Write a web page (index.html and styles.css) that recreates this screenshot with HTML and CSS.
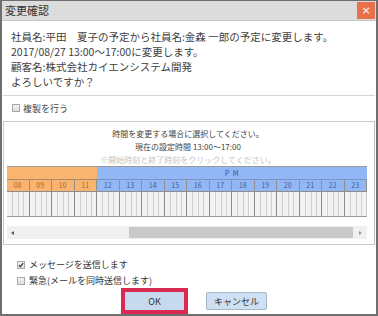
FILE: index.html
```html
<!DOCTYPE html>
<html lang="ja">
<head>
<meta charset="utf-8">
<link rel="stylesheet" href="styles.css">
</head>
<body>
<div class="dialog">
  <div class="titlebar">
    <span class="title">変更確認</span>
    <span class="close">×</span>
  </div>
  <div class="message">
    <p>社員名:平田　夏子の予定から社員名:金森 一郎の予定に変更します。</p>
    <p>2017/08/27 13:00〜17:00に変更します。</p>
    <p>顧客名:株式会社カイエンシステム開発</p>
    <p>よろしいですか？</p>
  </div>
  <label class="copy-row"><span class="cb"></span>複製を行う</label>
  <div class="panel">
    <div class="notes">
      <p>時間を変更する場合に選択してください。</p>
      <p>現在の設定時間 13:00〜17:00</p>
      <p class="hint">※開始時刻と終了時刻をクリックしてください。</p>
    </div>
    <div class="timeline">
      <div class="band am"></div>
      <div class="band pm">P M</div>
      <div class="hour am">08</div>
      <div class="hour am">09</div>
      <div class="hour am">10</div>
      <div class="hour am">11</div>
      <div class="hour pm">12</div>
      <div class="hour pm">13</div>
      <div class="hour pm">14</div>
      <div class="hour pm">15</div>
      <div class="hour pm">16</div>
      <div class="hour pm">17</div>
      <div class="hour pm">18</div>
      <div class="hour pm">19</div>
      <div class="hour pm">20</div>
      <div class="hour pm">21</div>
      <div class="hour pm">22</div>
      <div class="hour pm">23</div>
      <div class="slot"></div><div class="slot"></div><div class="slot"></div><div class="slot"></div>
      <div class="slot"></div><div class="slot"></div><div class="slot"></div><div class="slot"></div>
      <div class="slot"></div><div class="slot"></div><div class="slot"></div><div class="slot"></div>
      <div class="slot"></div><div class="slot"></div><div class="slot"></div><div class="slot"></div>
    </div>
    <div class="scrollbar">
      <span class="arrow left"></span>
      <span class="track"><span class="thumb"></span></span>
      <span class="arrow right"></span>
    </div>
  </div>
  <div class="options">
    <label class="opt"><span class="cb checked"><svg viewBox="0 0 8 8" width="8" height="8"><path d="M1.2 4.2 L3.2 6.2 L6.9 1.4" fill="none" stroke="#333" stroke-width="1.6"/></svg></span>メッセージを送信します</label>
    <label class="opt"><span class="cb"></span>緊急(メールを同時送信します)</label>
  </div>
  <div class="buttons">
    <button class="btn ok">OK</button>
    <button class="btn cancel">キャンセル</button>
  </div>
</div>
</body>
</html>
```
FILE: styles.css
```css
* { box-sizing: border-box; }
html, body { margin: 0; padding: 0; }
body {
  width: 378px;
  height: 316px;
  overflow: hidden;
  font-family: "Noto Sans CJK JP", "Noto Sans", sans-serif;
  color: #3a3a3a;
  background: #fff;
}
p { margin: 0; }

.dialog {
  width: 378px;
  height: 316px;
  border: 2px solid #6f6f6f;
  border-top-width: 1px;
  display: flex;
  flex-direction: column;
  background: #fff;
}

.titlebar {
  height: 20px;
  background: #dcdcdc;
  border-bottom: 1px solid #c6c6c6;
  display: flex;
  align-items: center;
  justify-content: space-between;
  padding: 0 1px 0 3px;
}
.title { font-size: 11px; color: #333; line-height: 1; }
.close {
  width: 18px;
  height: 17px;
  background: #e8704b;
  color: #fff;
  font-size: 11px;
  line-height: 17px;
  text-align: center;
  font-family: "DejaVu Sans", sans-serif;
}

.message {
  padding: 8px 0 6px 8px;
  font-size: 10.5px;
  line-height: 15px;
  color: #404040;
  border-bottom: 1px solid #d4d4d4;
  margin: 0 1px;
}

.copy-row {
  height: 26px;
  display: flex;
  align-items: center;
  padding-left: 10px;
  font-size: 9px;
  color: #444;
  gap: 3px;
}

.cb {
  width: 8px;
  height: 8px;
  border: 1px solid #a9a9a9;
  background: linear-gradient(#f2f2f2, #dcdcdc);
  display: inline-flex;
  align-items: center;
  justify-content: center;
  flex: none;
}
.cb svg { display: block; }

.panel {
  margin: 0 1px;
  border: 1px solid #c9c9c9;
  border-right-color: #bdbdbd;
  padding: 5px 5px 5px 3px;
  display: flex;
  flex-direction: column;
}

.notes {
  text-align: center;
  font-size: 8px;
  line-height: 13px;
  color: #444;
}
.notes .hint { color: #c4c4c4; }

.timeline {
  display: grid;
  grid-template-columns: repeat(16, 22.5px);
  grid-template-rows: 14px 12px 25px;
  width: 360px;
}
.band {
  border-top: 1px solid #9a9a9a;
  border-bottom: 1px solid #a68a6a;
  font-size: 7px;
  line-height: 12px;
  text-align: center;
  color: #34558c;
  letter-spacing: 1px;
}
.band.am { grid-column: span 4; background: #f9b46f; }
.band.pm { grid-column: span 12; background: #93b7f4; border-bottom-color: #7a94c4; }

.hour {
  font-size: 7px;
  line-height: 11px;
  text-align: center;
  border-right: 1px solid #8f8f8f;
  border-bottom: 1px solid #8c8c8c;
}
.hour.am { background: #f9b46f; color: #a5672e; }
.hour.pm { background: #93b7f4; color: #3e5f97; }
.hour:last-of-type { border-right: none; }

.slot {
  border-right: 1px solid #8a8a8a;
  border-bottom: 1px solid #9a9a9a;
  background:
    linear-gradient(to right,
      transparent 5px, #cfcfcf 5px 6px,
      transparent 6px 11px, #cfcfcf 11px 12px,
      transparent 12px 16px, #cfcfcf 16px 17px,
      transparent 17px),
    #f2f2f2;
}
.slot:last-child { border-right: 1px solid #c8c8c8; }

.scrollbar {
  margin-top: 9px;
  width: 360px;
  height: 13px;
  background: #f0f0f0;
  display: flex;
  align-items: center;
}
.arrow {
  width: 0;
  height: 0;
  border-top: 2.5px solid transparent;
  border-bottom: 2.5px solid transparent;
  flex: none;
}
.arrow.left { border-right: 3px solid #555; margin: 0 5px 0 4px; }
.arrow.right { border-left: 3px solid #999; margin: 0 5px 0 6px; }
.track { flex: 1; height: 13px; display: flex; justify-content: flex-end; align-items: center; }
.thumb { width: 224px; height: 11px; background: #c9c9c9; }

.options {
  padding: 12px 0 0 15px;
  font-size: 9px;
  line-height: 16px;
  color: #333;
}
.opt { display: flex; align-items: center; gap: 4px; }

.buttons {
  display: flex;
  align-items: center;
  padding-left: 119px;
  gap: 18px;
  margin-top: -1px;
}
.btn {
  font-family: "Noto Sans CJK JP", "Noto Sans", sans-serif;
  font-size: 9px;
  color: #333;
  padding: 0;
  margin: 0;
}
.btn.ok {
  width: 67px;
  height: 26px;
  border: 4px solid #d82a52;
  background: #c6d9ee;
}
.btn.cancel {
  width: 61px;
  height: 18px;
  border: 1px solid #a3b6ca;
  border-radius: 2px;
  background: #cfe0f3;
}
```
